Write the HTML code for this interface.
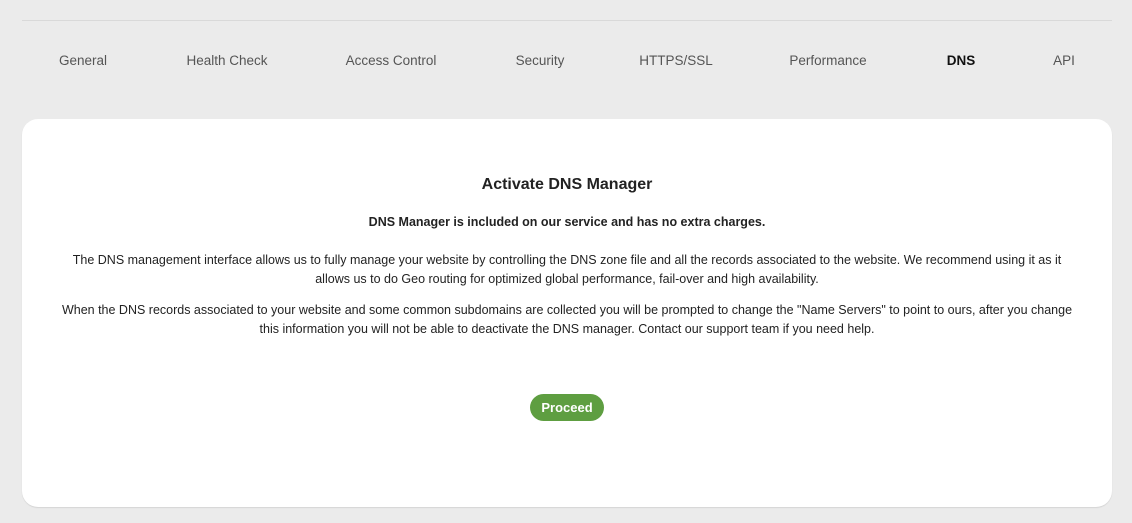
<!DOCTYPE html>
<html><head><style>
body{margin:0;background:#ebebeb;font-family:"Liberation Sans",sans-serif;width:1132px;height:523px;position:relative;overflow:hidden;color:#222}
.line{position:absolute;left:22px;top:20px;width:1090px;height:1px;background:#d9d9d9}
.tab{position:absolute;top:53px;font-size:13.5px;color:#555;transform:translateX(-50%);white-space:nowrap}
.card{position:absolute;left:22px;top:119px;width:1090px;height:388px;background:#fff;border-radius:16px;box-shadow:0 1px 1px #d4d4d4;text-align:center}
h2{position:absolute;top:57px;left:0;right:0;margin:0;font-size:16px;font-weight:bold;color:#222}
.b{position:absolute;top:96px;left:0;right:0;font-size:12.5px;font-weight:bold}
.p{position:absolute;left:20px;right:20px;font-size:12.5px;line-height:19px;margin:0}
.btn{position:absolute;left:508px;top:275px;width:74px;height:27px;border-radius:14px;background:#5e9e41;color:#fff;font-weight:bold;font-size:13px;line-height:27px}
</style></head><body>
<div class="line"></div>
<div class="tab" style="left:83px">General</div>
<div class="tab" style="left:227px">Health Check</div>
<div class="tab" style="left:391px">Access Control</div>
<div class="tab" style="left:540px">Security</div>
<div class="tab" style="left:676px">HTTPS/SSL</div>
<div class="tab" style="left:828px">Performance</div>
<div class="tab" style="left:961px;font-weight:bold;color:#111">DNS</div>
<div class="tab" style="left:1064px">API</div>
<div class="card">
<h2>Activate DNS Manager</h2>
<div class="b">DNS Manager is included on our service and has no extra charges.</div>
<p class="p" style="top:132px">The DNS management interface allows us to fully manage your website by controlling the DNS zone file and all the records associated to the website. We recommend using it as it<br>allows us to do Geo routing for optimized global performance, fail-over and high availability.</p>
<p class="p" style="top:182px">When the DNS records associated to your website and some common subdomains are collected you will be prompted to change the "Name Servers" to point to ours, after you change<br>this information you will not be able to deactivate the DNS manager. Contact our support team if you need help.</p>
<div class="btn">Proceed</div>
</div>
</body></html>
